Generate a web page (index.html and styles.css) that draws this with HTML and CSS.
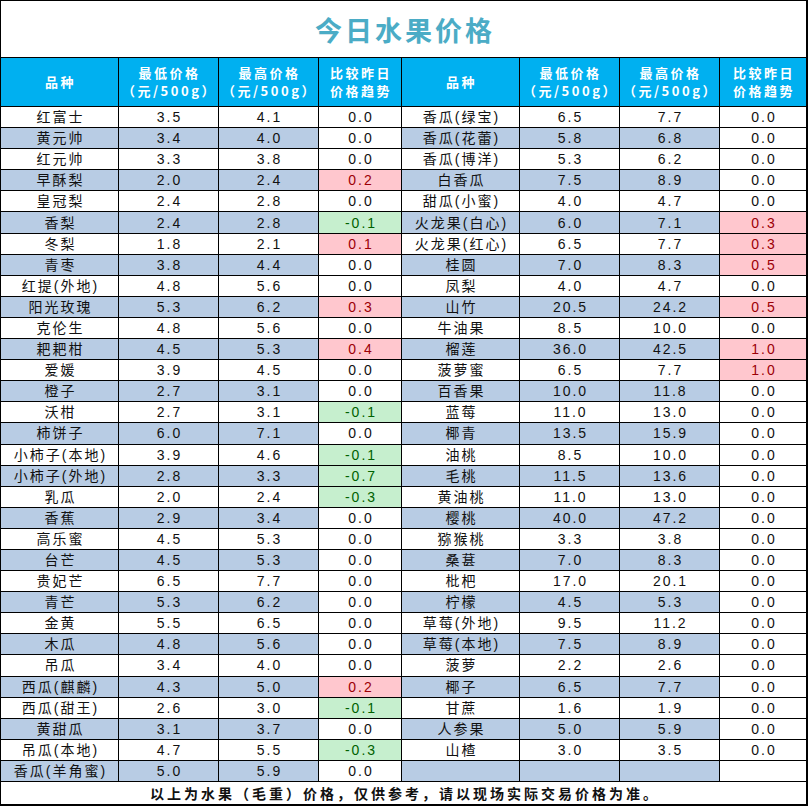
FILE: index.html
```html
<!DOCTYPE html>
<html lang="zh">
<head>
<meta charset="utf-8">
<title>今日水果价格</title>
<link rel="stylesheet" href="styles.css">
</head>
<body>
<div class="sheet">
  <div class="title">今日水果价格</div>

  <div class="h">品种</div>
  <div class="h"><span>最低价格</span><span>（元/500g）</span></div>
  <div class="h"><span>最高价格</span><span>（元/500g）</span></div>
  <div class="h"><span>比较昨日</span><span>价格趋势</span></div>
  <div class="h">品种</div>
  <div class="h"><span>最低价格</span><span>（元/500g）</span></div>
  <div class="h"><span>最高价格</span><span>（元/500g）</span></div>
  <div class="h"><span>比较昨日</span><span>价格趋势</span></div>

  <div class="c">红富士</div><div class="c">3.5</div><div class="c">4.1</div><div class="c">0.0</div>
  <div class="c">香瓜(绿宝)</div><div class="c">6.5</div><div class="c">7.7</div><div class="c">0.0</div>

  <div class="c b">黄元帅</div><div class="c b">3.4</div><div class="c b">4.0</div><div class="c">0.0</div>
  <div class="c b">香瓜(花蕾)</div><div class="c b">5.8</div><div class="c b">6.8</div><div class="c">0.0</div>

  <div class="c">红元帅</div><div class="c">3.3</div><div class="c">3.8</div><div class="c">0.0</div>
  <div class="c">香瓜(博洋)</div><div class="c">5.3</div><div class="c">6.2</div><div class="c">0.0</div>

  <div class="c b">早酥梨</div><div class="c b">2.0</div><div class="c b">2.4</div><div class="c up">0.2</div>
  <div class="c b">白香瓜</div><div class="c b">7.5</div><div class="c b">8.9</div><div class="c">0.0</div>

  <div class="c">皇冠梨</div><div class="c">2.4</div><div class="c">2.8</div><div class="c">0.0</div>
  <div class="c">甜瓜(小蜜)</div><div class="c">4.0</div><div class="c">4.7</div><div class="c">0.0</div>

  <div class="c b">香梨</div><div class="c b">2.4</div><div class="c b">2.8</div><div class="c dn">-0.1</div>
  <div class="c b">火龙果(白心)</div><div class="c b">6.0</div><div class="c b">7.1</div><div class="c up">0.3</div>

  <div class="c">冬梨</div><div class="c">1.8</div><div class="c">2.1</div><div class="c up">0.1</div>
  <div class="c">火龙果(红心)</div><div class="c">6.5</div><div class="c">7.7</div><div class="c up">0.3</div>

  <div class="c b">青枣</div><div class="c b">3.8</div><div class="c b">4.4</div><div class="c">0.0</div>
  <div class="c b">桂圆</div><div class="c b">7.0</div><div class="c b">8.3</div><div class="c up">0.5</div>

  <div class="c">红提(外地)</div><div class="c">4.8</div><div class="c">5.6</div><div class="c">0.0</div>
  <div class="c">凤梨</div><div class="c">4.0</div><div class="c">4.7</div><div class="c">0.0</div>

  <div class="c b">阳光玫瑰</div><div class="c b">5.3</div><div class="c b">6.2</div><div class="c up">0.3</div>
  <div class="c b">山竹</div><div class="c b">20.5</div><div class="c b">24.2</div><div class="c up">0.5</div>

  <div class="c">克伦生</div><div class="c">4.8</div><div class="c">5.6</div><div class="c">0.0</div>
  <div class="c">牛油果</div><div class="c">8.5</div><div class="c">10.0</div><div class="c">0.0</div>

  <div class="c b">耙耙柑</div><div class="c b">4.5</div><div class="c b">5.3</div><div class="c up">0.4</div>
  <div class="c b">榴莲</div><div class="c b">36.0</div><div class="c b">42.5</div><div class="c up">1.0</div>

  <div class="c">爱媛</div><div class="c">3.9</div><div class="c">4.5</div><div class="c">0.0</div>
  <div class="c">菠萝蜜</div><div class="c">6.5</div><div class="c">7.7</div><div class="c up">1.0</div>

  <div class="c b">橙子</div><div class="c b">2.7</div><div class="c b">3.1</div><div class="c">0.0</div>
  <div class="c b">百香果</div><div class="c b">10.0</div><div class="c b">11.8</div><div class="c">0.0</div>

  <div class="c">沃柑</div><div class="c">2.7</div><div class="c">3.1</div><div class="c dn">-0.1</div>
  <div class="c">蓝莓</div><div class="c">11.0</div><div class="c">13.0</div><div class="c">0.0</div>

  <div class="c b">柿饼子</div><div class="c b">6.0</div><div class="c b">7.1</div><div class="c">0.0</div>
  <div class="c b">椰青</div><div class="c b">13.5</div><div class="c b">15.9</div><div class="c">0.0</div>

  <div class="c">小柿子(本地)</div><div class="c">3.9</div><div class="c">4.6</div><div class="c dn">-0.1</div>
  <div class="c">油桃</div><div class="c">8.5</div><div class="c">10.0</div><div class="c">0.0</div>

  <div class="c b">小柿子(外地)</div><div class="c b">2.8</div><div class="c b">3.3</div><div class="c dn">-0.7</div>
  <div class="c b">毛桃</div><div class="c b">11.5</div><div class="c b">13.6</div><div class="c">0.0</div>

  <div class="c">乳瓜</div><div class="c">2.0</div><div class="c">2.4</div><div class="c dn">-0.3</div>
  <div class="c">黄油桃</div><div class="c">11.0</div><div class="c">13.0</div><div class="c">0.0</div>

  <div class="c b">香蕉</div><div class="c b">2.9</div><div class="c b">3.4</div><div class="c">0.0</div>
  <div class="c b">樱桃</div><div class="c b">40.0</div><div class="c b">47.2</div><div class="c">0.0</div>

  <div class="c">高乐蜜</div><div class="c">4.5</div><div class="c">5.3</div><div class="c">0.0</div>
  <div class="c">猕猴桃</div><div class="c">3.3</div><div class="c">3.8</div><div class="c">0.0</div>

  <div class="c b">台芒</div><div class="c b">4.5</div><div class="c b">5.3</div><div class="c">0.0</div>
  <div class="c b">桑葚</div><div class="c b">7.0</div><div class="c b">8.3</div><div class="c">0.0</div>

  <div class="c">贵妃芒</div><div class="c">6.5</div><div class="c">7.7</div><div class="c">0.0</div>
  <div class="c">枇杷</div><div class="c">17.0</div><div class="c">20.1</div><div class="c">0.0</div>

  <div class="c b">青芒</div><div class="c b">5.3</div><div class="c b">6.2</div><div class="c">0.0</div>
  <div class="c b">柠檬</div><div class="c b">4.5</div><div class="c b">5.3</div><div class="c">0.0</div>

  <div class="c">金黄</div><div class="c">5.5</div><div class="c">6.5</div><div class="c">0.0</div>
  <div class="c">草莓(外地)</div><div class="c">9.5</div><div class="c">11.2</div><div class="c">0.0</div>

  <div class="c b">木瓜</div><div class="c b">4.8</div><div class="c b">5.6</div><div class="c">0.0</div>
  <div class="c b">草莓(本地)</div><div class="c b">7.5</div><div class="c b">8.9</div><div class="c">0.0</div>

  <div class="c">吊瓜</div><div class="c">3.4</div><div class="c">4.0</div><div class="c">0.0</div>
  <div class="c">菠萝</div><div class="c">2.2</div><div class="c">2.6</div><div class="c">0.0</div>

  <div class="c b">西瓜(麒麟)</div><div class="c b">4.3</div><div class="c b">5.0</div><div class="c up">0.2</div>
  <div class="c b">椰子</div><div class="c b">6.5</div><div class="c b">7.7</div><div class="c">0.0</div>

  <div class="c">西瓜(甜王)</div><div class="c">2.6</div><div class="c">3.0</div><div class="c dn">-0.1</div>
  <div class="c">甘蔗</div><div class="c">1.6</div><div class="c">1.9</div><div class="c">0.0</div>

  <div class="c b">黄甜瓜</div><div class="c b">3.1</div><div class="c b">3.7</div><div class="c">0.0</div>
  <div class="c b">人参果</div><div class="c b">5.0</div><div class="c b">5.9</div><div class="c">0.0</div>

  <div class="c">吊瓜(本地)</div><div class="c">4.7</div><div class="c">5.5</div><div class="c dn">-0.3</div>
  <div class="c">山楂</div><div class="c">3.0</div><div class="c">3.5</div><div class="c">0.0</div>

  <div class="c b">香瓜(羊角蜜)</div><div class="c b">5.0</div><div class="c b">5.9</div><div class="c">0.0</div>
  <div class="c b"></div><div class="c b"></div><div class="c b"></div><div class="c"></div>

  <div class="foot">以上为水果（毛重）价格，仅供参考，请以现场实际交易价格为准。</div>
</div>
</body>
</html>
```

FILE: styles.css
```css
html, body {
  margin: 0;
  padding: 0;
  background: #ffffff;
}

.sheet {
  box-sizing: border-box;
  width: 808px;
  height: 806px;
  padding: 1px 2px 2px 1px;
  background: #000000;
  display: grid;
  grid-template-columns: 117px 99px 99px 82px 117px 99px 99px 86px;
  grid-template-rows: 56px 48px repeat(32, 1fr) 22px;
  gap: 1px;
  font-family: "Liberation Sans", "Noto Sans CJK SC", sans-serif;
  color: #111111;
}

.title {
  grid-column: 1 / -1;
  background: #ffffff;
  display: flex;
  align-items: center;
  justify-content: center;
  font-family: "Noto Sans CJK SC", sans-serif;
  font-size: 27px;
  font-weight: 700;
  letter-spacing: 3px;
  color: #4bacc6;
  padding-left: 3px;
}

.h {
  background: #00b0f0;
  color: #ffffff;
  display: flex;
  flex-direction: column;
  align-items: center;
  justify-content: center;
  text-align: center;
  font-family: "Noto Sans CJK SC", sans-serif;
  font-size: 13px;
  font-weight: 700;
  line-height: 18px;
  letter-spacing: 2.5px;
  padding-left: 2px;
}

.h span {
  display: block;
  height: 18px;
  line-height: 18px;
}

.c {
  background: #ffffff;
  display: flex;
  align-items: center;
  justify-content: center;
  font-size: 14px;
  line-height: 1;
  letter-spacing: 2px;
  padding-left: 2px;
  white-space: nowrap;
  overflow: hidden;
}

.b {
  background: #b8cce4;
}

.up {
  background: #ffc7ce;
  color: #9c0006;
}

.dn {
  background: #c6efce;
  color: #006100;
}

.foot {
  grid-column: 1 / -1;
  background: #ffffff;
  display: flex;
  align-items: center;
  justify-content: center;
  font-family: "Noto Sans CJK SC", sans-serif;
  font-size: 14px;
  font-weight: 700;
  letter-spacing: 3px;
  padding-left: 3px;
}
```
